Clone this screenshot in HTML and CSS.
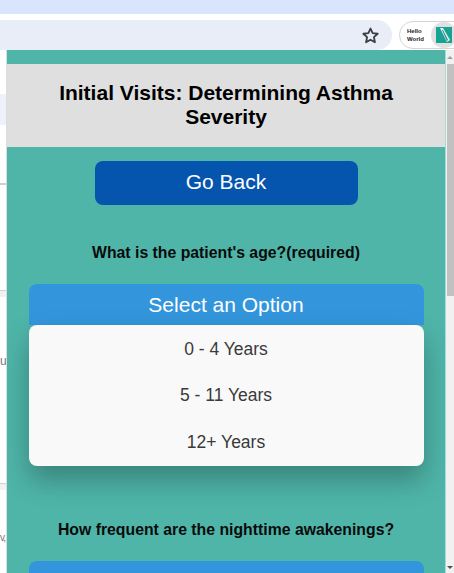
FILE: index.html
```html
<!DOCTYPE html>
<html lang="en">
<head>
  <meta charset="UTF-8">
  <meta name="viewport" content="width=device-width, initial-scale=1.0">
  <title>Initial Visits: Determining Asthma Severity</title>
  <link rel="stylesheet" href="styles.css">
</head>
<body>

  <div class="tabstrip"></div>

  <div class="toolbar">
    <div class="omnibox">
      <svg class="star" viewBox="0 0 24 24" width="19" height="19">
        <path d="M12 3.2l2.7 5.9 6.4.7-4.8 4.3 1.3 6.4L12 17.3l-5.6 3.2 1.3-6.4-4.8-4.3 6.4-.7z" fill="none" stroke="#3c4043" stroke-width="2.3" stroke-linejoin="round"/>
      </svg>
    </div>
    <div class="profile">
      <span class="profile-name">Hello<br>World</span>
      <span class="avatar">
        <svg viewBox="0 0 16 16" width="16" height="16">
          <rect width="16" height="16" fill="#17a394"/>
          <path d="M4 1l3 0 7 12-3 2z" fill="#e6f5f3"/>
          <path d="M6 3l1 0 5 10-1 1z" fill="#3b7f86"/>
        </svg>
      </span>
    </div>
  </div>

  <div class="window">
    <div class="behind">
      <div class="behind-blue"></div>
      <div class="behind-line line-a"></div>
      <div class="behind-line line-b"></div>
      <div class="behind-text text-a">u</div>
      <div class="behind-line line-c"></div>
      <div class="behind-text text-b">v,</div>
    </div>

    <main class="popup">
      <div class="popup-top"></div>
      <header class="title-bar">
        <h1>Initial Visits: Determining Asthma Severity</h1>
      </header>

      <button class="back-button">Go Back</button>

      <p class="question first">What is the patient's age?(required)</p>

      <div class="select">
        <div class="select-head">Select an Option</div>
        <ul class="options">
          <li>0 - 4 Years</li>
          <li>5 - 11 Years</li>
          <li>12+ Years</li>
        </ul>
      </div>

      <p class="question second">How frequent are the nighttime awakenings?</p>

      <div class="select">
        <div class="select-head"></div>
      </div>
    </main>

    <div class="scrollbar">
      <div class="arrow up"></div>
      <div class="thumb"></div>
      <div class="arrow down"></div>
    </div>
  </div>

</body>
</html>
```

FILE: styles.css
```css
body {
  margin: 0;
  height: 573px;
  overflow: hidden;
  background-color: #fff;
  font-family: "Liberation Sans", Arial, sans-serif;
  display: flex;
  flex-direction: column;
}

.tabstrip {
  height: 14px;
  background-color: #d9e5fc;
}

.toolbar {
  height: 36px;
  background-color: #fff;
  display: flex;
  align-items: flex-start;
  padding-top: 6px;
  box-sizing: border-box;
  overflow: hidden;
}

.omnibox {
  width: 392px;
  height: 30px;
  flex-shrink: 0;
  background-color: #e9edf8;
  border-radius: 0 15px 15px 0;
  display: flex;
  align-items: center;
  justify-content: flex-end;
  padding-right: 12px;
  box-sizing: border-box;
}

.profile {
  margin-left: 7px;
  margin-top: 1px;
  width: 70px;
  height: 28px;
  border: 1px solid #d5d5d5;
  border-radius: 14px;
  box-sizing: border-box;
  display: flex;
  align-items: center;
  flex-shrink: 0;
}

.profile-name {
  font-size: 6px;
  line-height: 8px;
  font-weight: bold;
  color: #222;
  margin-left: 7px;
  width: 24px;
}

.avatar {
  width: 26px;
  height: 26px;
  border-radius: 50%;
  background-color: #e0e0e0;
  display: flex;
  align-items: center;
  justify-content: center;
  flex-shrink: 0;
}

.window {
  flex: 1;
  display: flex;
  min-height: 0;
}

.behind {
  width: 7px;
  flex-shrink: 0;
  background-color: #fff;
  border-right: 1px solid #dcdcdc;
  box-sizing: border-box;
  overflow: hidden;
  display: flex;
  flex-direction: column;
}

.behind-blue {
  height: 31px;
  margin-top: 44px;
  background-color: #eef1fa;
}

.behind-line {
  height: 2px;
  background-color: #cfcfcf;
}

.line-a {
  margin-top: 58px;
}

.line-b {
  margin-top: 105px;
  height: 7px;
  border-top: 1px solid #d0d0d0;
  box-sizing: border-box;
  background-color: #f1f1f1;
}

.behind-text {
  font-size: 12px;
  line-height: 15px;
  color: #777;
  white-space: nowrap;
}

.text-a {
  margin-top: 57px;
}

.line-c {
  margin-top: 114px;
  height: 7px;
  border-top: 1px solid #d0d0d0;
  box-sizing: border-box;
  background-color: #f1f1f1;
}

.text-b {
  margin-top: 40px;
  font-size: 10px;
  letter-spacing: -1px;
}

.popup {
  width: 439px;
  flex-shrink: 0;
  background-color: #4fb5a9;
  border-right: 1px solid #a5dbd4;
  box-sizing: border-box;
  overflow: hidden;
  display: flex;
  flex-direction: column;
  align-items: center;
}

.popup-top {
  height: 14px;
  flex-shrink: 0;
}

.title-bar {
  width: 100%;
  height: 83px;
  flex-shrink: 0;
  background-color: #dfdfdf;
  display: flex;
  align-items: center;
  justify-content: center;
  box-sizing: border-box;
  padding: 0 30px 2px;
}

h1 {
  margin: 0;
  font-size: 21px;
  line-height: 24px;
  font-weight: bold;
  color: #000;
  text-align: center;
}

.back-button {
  flex-shrink: 0;
  margin-top: 14px;
  width: 263px;
  height: 44px;
  padding: 0 0 2px;
  background-color: #0554ae;
  color: #fff;
  font-family: inherit;
  font-size: 21px;
  border: none;
  border-radius: 8px;
}

.question {
  flex-shrink: 0;
  margin: 0;
  font-size: 15.8px;
  line-height: 20px;
  font-weight: bold;
  color: #0b0b0b;
  text-align: center;
}

.first {
  margin-top: 38px;
}

.second {
  margin-top: 54px;
}

.select {
  flex-shrink: 0;
  width: 395px;
  margin-top: 21px;
}

.select-head {
  height: 41px;
  background-color: #3396dc;
  color: #fff;
  font-size: 21px;
  line-height: 41px;
  text-align: center;
  border-radius: 8px 8px 0 0;
}

.options {
  list-style: none;
  margin: 0;
  padding: 0;
  height: 141px;
  background-color: #f9f9f9;
  border-radius: 8px;
  box-shadow: 0 14px 28px rgba(0, 0, 0, 0.28);
  display: flex;
  flex-direction: column;
  justify-content: center;
}

.options li {
  height: 46.5px;
  line-height: 46.5px;
  text-align: center;
  font-size: 17.5px;
  color: #3a3a3a;
}

.scrollbar {
  width: 8px;
  flex-shrink: 0;
  background-color: #f1f1f1;
  display: flex;
  flex-direction: column;
  align-items: center;
}

.thumb {
  width: 7px;
  height: 232px;
  margin: 5px 0 0 1px;
  background-color: #c1c1c1;
}

.arrow {
  width: 0;
  height: 0;
  border-left: 3px solid transparent;
  border-right: 3px solid transparent;
}

.arrow.up {
  margin-top: 6px;
  border-bottom: 3px solid #a0a0a0;
}

.arrow.down {
  margin-top: auto;
  margin-bottom: 4px;
  border-top: 3px solid #505050;
}
```
